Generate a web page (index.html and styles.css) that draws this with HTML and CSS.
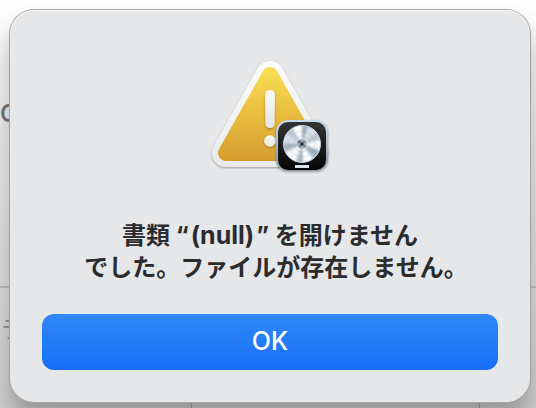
FILE: index.html
```html
<!DOCTYPE html>
<html lang="ja">
    <head>
        <meta charset="utf-8">
        <title>Alert</title>
        <link rel="stylesheet" href="styles.css">
    </head>
    <body>
        <div class="backdrop" aria-hidden="true">
            <div class="backdrop-top">C</div>
            <div class="backdrop-row">
                <div class="cell">ラ</div>
                <div class="cell"></div>
                <div></div>
            </div>
        </div>

        <div class="stage">
            <div class="dialog" role="alertdialog" aria-labelledby="message">
                <svg class="icon" viewBox="0 0 128 128" aria-hidden="true">
                    <defs>
                        <linearGradient id="yellow" gradientUnits="userSpaceOnUse" x1="0" y1="16" x2="0" y2="111">
                            <stop offset="0" stop-color="#fce057" />
                            <stop offset="0.5" stop-color="#e9bd3f" />
                            <stop offset="1" stop-color="#d69d2d" />
                        </linearGradient>
                        <linearGradient id="mark" x1="0" y1="0" x2="0" y2="1">
                            <stop offset="0" stop-color="#f8f8f8" />
                            <stop offset="1" stop-color="#e6e5e1" />
                        </linearGradient>
                        <linearGradient id="edge" gradientUnits="userSpaceOnUse" x1="0" y1="11" x2="0" y2="117">
                            <stop offset="0" stop-color="#fcfcfc" />
                            <stop offset="1" stop-color="#e8e9e9" />
                        </linearGradient>
                        <linearGradient id="black" x1="0" y1="0" x2="0" y2="1">
                            <stop offset="0" stop-color="#343434" />
                            <stop offset="1" stop-color="#050505" />
                        </linearGradient>
                        <linearGradient id="rim" x1="0" y1="0" x2="0" y2="1">
                            <stop offset="0" stop-color="#c8dbec" />
                            <stop offset="1" stop-color="#8995a1" />
                        </linearGradient>
                        <filter id="shadow" x="-20%" y="-20%" width="140%" height="140%">
                            <feDropShadow dx="0" dy="1" stdDeviation="1" flood-color="#000" flood-opacity="0.35" />
                        </filter>
                        <filter id="soft" x="-20%" y="-20%" width="140%" height="140%">
                            <feGaussianBlur stdDeviation="1" />
                        </filter>
                        <clipPath id="disc"><circle cx="96" cy="94" r="18.5" /></clipPath>
                    </defs>

                    <!-- warning triangle -->
                    <path d="M64 25 L20 103 H108 Z" fill="url(#edge)" stroke="url(#edge)" stroke-width="28" stroke-linejoin="round" filter="url(#shadow)" />
                    <path d="M64 25 L20 103 H108 Z" fill="url(#yellow)" stroke="url(#yellow)" stroke-width="16" stroke-linejoin="round" />
                    <g fill="url(#mark)" filter="url(#shadow)">
                        <path d="M59 45 Q59 40 64 40 Q69 40 69 45 L68.5 74 Q68 78 64 78 Q60 78 59.5 74 Z" />
                        <circle cx="64" cy="91" r="5.8" />
                    </g>

                    <!-- app badge -->
                    <rect x="70" y="70" width="52" height="51" rx="12" fill="url(#rim)" filter="url(#shadow)" />
                    <rect x="72" y="72" width="48" height="48" rx="10" fill="url(#black)" />
                    <g clip-path="url(#disc)">
                        <circle cx="96" cy="94" r="19" fill="#bcc8d4" />
                        <g filter="url(#soft)">
                            <path d="M96 94 L82 70 L95 68 Z" fill="#ffffff" />
                            <path d="M96 94 L97 70 L103 70 Z" fill="#9aaaba" />
                            <path d="M96 94 L105 70 L116 78 Z" fill="#d5dfe8" />
                            <path d="M96 94 L122 88 L122 103 Z" fill="#f5faff" />
                            <path d="M96 94 L120 104 L113 111 Z" fill="#9babbb" />
                            <path d="M96 94 L111 116 L98 120 Z" fill="#fbfdff" />
                            <path d="M96 94 L97 118 L91 118 Z" fill="#a7b5c3" />
                            <path d="M96 94 L87 118 L70 108 Z" fill="#f4f8fc" />
                            <path d="M96 94 L72 102 L72 94 Z" fill="#a3b1c0" />
                            <path d="M96 94 L72 92 L75 80 Z" fill="#d5e0ea" />
                        </g>
                        <g fill="none" stroke="#6e8296" stroke-opacity="0.14">
                            <circle cx="96" cy="94" r="8" />
                            <circle cx="96" cy="94" r="13" />
                        </g>
                    </g>
                    <circle cx="96" cy="94" r="18.5" fill="none" stroke="#c6d5e2" />
                    <circle cx="96" cy="94" r="5" fill="#8e9baa" fill-opacity="0.6" />
                    <path d="M94 90 L96 92 L99 91 L98 94 L100 97 L96 96 L93 98 L94 94 L91 92 Z" fill="#64717f" />
                    <circle cx="96" cy="94" r="1.2" fill="#222a31" />
                    <rect x="89" y="115" width="14" height="3" fill="#dce3e8" />
                </svg>

                <p class="message" id="message">書類 “<span class="file">(null)</span>” を開けません<br>でした。ファイルが存在しません<span class="stop">。</span></p>

                <button class="ok" type="button">OK</button>
            </div>
        </div>
    </body>
</html>
```

FILE: styles.css
```css
* {
    box-sizing: border-box;
}

body {
    display: grid;
    min-height: 100vh;
    margin: 0;
    overflow: hidden;
    background: linear-gradient(#ffffff, #eeeeee 30%, #dedede 70%, #d0d0d0);
    font-family: Inter, "Noto Sans CJK JP", sans-serif;
}

/* the window behind and the dialog share one grid cell */
.backdrop, .stage {
    grid-area: 1 / 1;
    min-width: 0;
}

.backdrop {
    display: grid;
    grid-template-rows: 288px 1fr;
    color: #777777;
    font-size: 24px;
}

.backdrop-top {
    padding-top: 98px;
    border-bottom: 2px solid #bebebe;
    font-weight: 600;
    line-height: 32px;
}

.backdrop-row {
    display: grid;
    grid-template-columns: 192px 288px 1fr;
}

.cell {
    padding-top: 26px;
    border-right: 1px solid #a8a8a8;
    color: #8c8c8c;
    line-height: 32px;
}

.stage {
    position: relative;
    display: flex;
    padding: 10px 6px 6px 10px;
}

.dialog {
    display: flex;
    flex: 1;
    flex-direction: column;
    align-items: center;
    padding: 40px 32px 32px;
    border-radius: 24px;
    background-color: #e6e7e9;
    box-shadow: inset 0 1px 0 #f8f8f8, 0 0 0 1px #a4a4a4, 0 18px 24px rgba(0, 0, 0, 0.28);
}

.icon {
    width: 128px;
    height: 128px;
}

.message {
    margin: 42px 0 30px;
    color: #2b2c2e;
    font-size: 24px;
    font-weight: 700;
    line-height: 32px;
    text-align: center;
    white-space: nowrap;
}

.file {
    margin: 0 2px;
    font-size: 25px;
    line-height: 24px;
}

/* half-width full stop at the line end, so the line centres on its letters */
.stop {
    font-feature-settings: "halt";
}

.ok {
    width: 100%;
    height: 56px;
    padding: 0 0 2px;
    border: 0;
    border-radius: 12px;
    background: linear-gradient(#3088f8, #166ff6);
    color: #ffffff;
    font-family: inherit;
    font-size: 25px;
    font-weight: 500;
    cursor: pointer;
}
```
